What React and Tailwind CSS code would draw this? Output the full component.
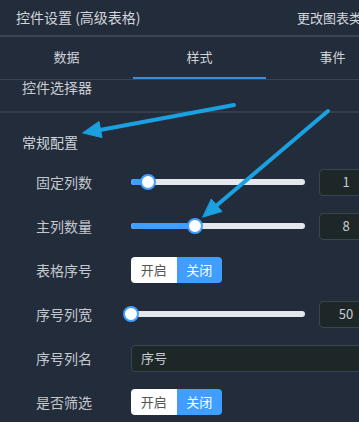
const font = { fontFamily: '"Noto Sans CJK SC", "Noto Sans", sans-serif' };

function Slider({ pct, value }) {
  return (
    <div className="flex items-center flex-1">
      <div className="relative w-[174px] h-[6px] rounded-full bg-[#e4e7ed]">
        <div className="absolute left-0 top-0 h-[6px] rounded-full bg-[#409eff]" style={{ width: pct + '%' }} />
        <div
          className="absolute top-1/2 w-[16px] h-[16px] -mt-[8px] -ml-[8px] rounded-full bg-white border-2 border-[#409eff]"
          style={{ left: pct + '%' }}
        />
      </div>
      <div className="ml-[14px] w-[54px] h-[27px] shrink-0 rounded-[4px] border border-[#3a4450] bg-[#1e2727] flex items-center justify-center text-[13px] text-[#c8ccd2]">
        {value}
      </div>
    </div>
  );
}

function Toggle() {
  return (
    <div className="flex h-[26px] w-[91px] rounded-[4px] overflow-hidden text-[13px]">
      <div className="flex-1 bg-white text-[#555] flex items-center justify-center">开启</div>
      <div className="flex-1 bg-[#409eff] text-white flex items-center justify-center">关闭</div>
    </div>
  );
}

function Row({ label, children }) {
  return (
    <div className="flex items-center h-[44px]">
      <div className="w-[131px] shrink-0 pl-[36px] text-[14px] text-[#c3c8cf]">{label}</div>
      {children}
    </div>
  );
}

export default function App() {
  return (
    <div className="relative w-[359px] h-[422px] overflow-hidden bg-[#232c3b] text-[#c8ccd2]" style={font}>
      <div className="flex items-center h-[37px] pl-[16px] border-b-2 border-[#3a4350] whitespace-nowrap w-[420px]">
        <span className="w-[281px] shrink-0 text-[14px] text-[#d2d6dc]">控件设置 (高级表格)</span>
        <span className="text-[13px] text-[#d2d6dc]">更改图表类型</span>
      </div>

      <div className="flex h-[43px] border-b border-[#3a4350] w-[400px]">
        {['数据', '样式', '事件'].map((t, i) => (
          <div key={t} className="w-[133px] shrink-0 flex flex-col">
            <div className="flex-1 flex items-center justify-center text-[13px] text-[#d0d4da]">{t}</div>
            <div className={i === 1 ? 'h-[2px] bg-[#3f8cd8]' : 'h-[2px]'} />
          </div>
        ))}
      </div>

      <div className="h-[33px] pl-[22px] border-b-2 border-[#353e4b]">
        <div className="text-[14px] leading-[14px] text-[#c8ccd2]">控件选择器</div>
      </div>

      <div className="pl-[22px] pt-[19px] pb-[8px] text-[14px] leading-[20px] text-[#d0d4da]">常规配置</div>

      <Row label="固定列数"><Slider pct={10} value="1" /></Row>
      <Row label="主列数量"><Slider pct={37} value="8" /></Row>
      <Row label="表格序号"><Toggle /></Row>
      <Row label="序号列宽"><Slider pct={0} value="50" /></Row>
      <Row label="序号列名">
        <div className="flex-1 h-[27px] mr-[-20px] rounded-[4px] border border-[#3a4450] bg-[#1e2727] flex items-center pl-[9px] text-[13px] text-[#c8ccd2]">
          序号
        </div>
      </Row>
      <Row label="是否筛选"><Toggle /></Row>

      <svg className="absolute inset-0 pointer-events-none" width="359" height="422">
        <g stroke="#1aa1e2" strokeWidth="4" strokeLinecap="round" fill="#1aa1e2">
          <line x1="234" y1="105" x2="100" y2="130" />
          <polygon points="83,133 102,137.6 99,121.8" strokeWidth="1" strokeLinejoin="round" />
          <line x1="328" y1="111" x2="216" y2="206" />
          <polygon points="203,217 222,211.5 211.5,199.3" strokeWidth="1" strokeLinejoin="round" />
        </g>
      </svg>
    </div>
  );
}
